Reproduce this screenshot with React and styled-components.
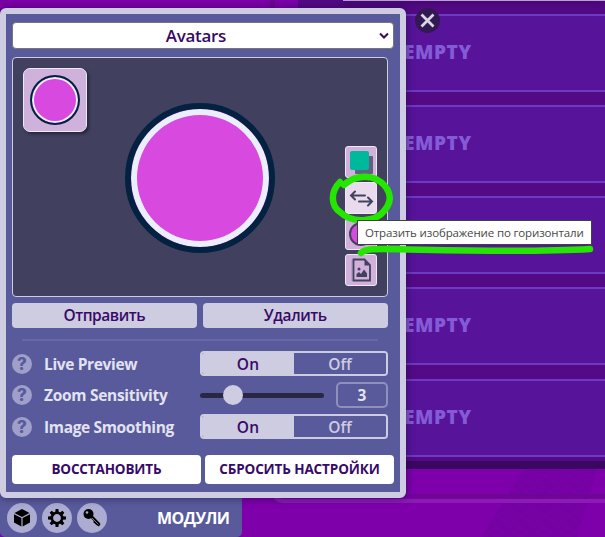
import React from "react";
import styled, { createGlobalStyle } from "styled-components";

const Global = createGlobalStyle`
  *, *::before, *::after { box-sizing: border-box; }
  html, body { margin: 0; overflow: hidden; }
  body { font-family: "Open Sans", "Noto Sans", sans-serif; background: #7d00aa; }
  button { font: inherit; border: 0; padding: 0; margin: 0; }
`;

const Screen = styled.main`
  position: relative;
  width: 605px;
  height: 537px;
  overflow: hidden;
  background: #7d00aa;
`;

const Label = styled.span`
  display: inline-block;
  white-space: nowrap;
  letter-spacing: ${(p) => p.$ls || 0}px;
  margin-right: ${(p) => -(p.$ls || 0)}px;
`;

/* Lobby behind the dialog */
const Lobby = styled.section`
  margin-left: 298px;
  height: 469px;
  padding: 13.5px 0 0 2px;
  background: #540a86;
  border-bottom: 8px solid #3a0860;
`;
const Seam = styled.div`
  position: absolute;
  left: 270px;
  top: 0;
  width: 5px;
  height: 8px;
  background: #6c0791;
`;
const TopBar = styled.div`
  position: absolute;
  left: 343px;
  right: 0;
  top: 0;
  height: 1px;
  background: #b9a2cf;
  box-shadow: 0 1px 6px 1px #3b0560;
`;
const Slot = styled.div`
  display: flex;
  align-items: center;
  height: 78px;
  margin-bottom: 13.25px;
  padding: 0 0 2px 102px;
  background: #57149a;
  border: 2px solid #6d3bc2;
  border-right: 0;
  color: #845bd6;
  font-size: 19px;
  font-weight: 800;
`;
const Backdrop = styled.svg`
  position: absolute;
  left: 242px;
  top: 469px;
`;

/* Modules bar */
const ModuleBar = styled.footer`
  position: absolute;
  left: 0;
  top: 490px;
  width: 242px;
  height: 47px;
  padding: 13px 12px 4px 7px;
  display: flex;
  align-items: center;
  gap: 5px;
  color: #fff;
  background: #585a9b;
  border-radius: 0 0 5px 5px;
  font-size: 16px;
  font-weight: 700;
`;
const RoundButton = styled.button`
  width: 30px;
  height: 30px;
  border-radius: 50%;
  background: #acabd2;
  display: grid;
  place-items: center;
  svg { display: block; }
`;
const ModuleTitle = styled.div`margin-left: auto;`;

/* Dialog */
const Dialog = styled.section`
  position: absolute;
  left: 0;
  top: 8px;
  width: 406px;
  height: 490px;
  padding: 8px 6px;
  border: 6px solid #cdcce1;
  border-radius: 6px;
  background: #585a9b;
  box-shadow: 0 0 9px rgba(25, 5, 60, 0.6);
  color: #380a68;
`;
const SelectBox = styled.div`
  position: relative;
  width: 382px;
  height: 27px;
  display: grid;
  place-items: center;
  padding: 0 14px 1px 0;
  border: 1px solid #767676;
  border-radius: 4px;
  background: #fff;
  font-size: 17px;
  font-weight: 600;
  line-height: 1;
  svg { position: absolute; right: 4px; top: 9px; }
`;
const Canvas = styled.div`
  position: relative;
  width: 376px;
  height: 240px;
  margin-top: 8px;
  border: 1px solid #cdcce1;
  border-radius: 4px;
  background: #41415f;
`;
const Preview = styled.div`
  position: absolute;
  left: 112px;
  top: 45px;
  width: 150px;
  height: 150px;
  border: 6px solid #032242;
  border-radius: 50%;
  background: #d84adf;
  box-shadow: inset 0 0 0 6px #e9effc;
`;
const Thumb = styled.div`
  position: absolute;
  left: 10px;
  top: 10px;
  width: 64px;
  height: 64px;
  padding: 6px;
  border: 1px solid #ecebf9;
  border-radius: 7px;
  background: #cfb1dc;
  box-shadow: 2px 2px 3px #24243b;
`;
const ThumbDot = styled.div`
  width: 50px;
  height: 50px;
  border: 2px solid #032242;
  border-radius: 50%;
  background: #d84adf;
  box-shadow: inset 0 0 0 2px #e9effc;
`;
const Tools = styled.div`
  position: absolute;
  left: 332px;
  top: 88px;
  display: grid;
  gap: 4px;
`;
const Tool = styled.button`
  width: 32px;
  height: 32px;
  border: 1px solid #f0e8f6;
  border-radius: 3px;
  background: ${(p) => (p.$active ? "#e9dbed" : "#d2b0dc")};
  svg { display: block; }
`;
const Row = styled.div`
  display: flex;
  align-items: center;
  gap: ${(p) => p.$gap || 0}px;
`;
const Action = styled.button`
  width: 185px;
  height: 25px;
  border-radius: 4px;
  color: #380a68;
  background: #cdcce1;
  font-size: 15.5px;
  font-weight: 600;
  line-height: 23px;
`;
const Actions = styled(Row)`margin-top: 6px;`;
const Divider = styled.div`
  width: 356px;
  height: 2px;
  margin: 11px 0 10px 10px;
  background: #6667a6;
`;
const Settings = styled.div`
  width: 376px;
  display: grid;
  grid-template-rows: 25px 26px 25px;
  row-gap: 6px;
`;
const Setting = styled.div`
  display: grid;
  grid-template-columns: 32px 156px 188px;
  align-items: center;
  color: #e2e2f1;
  font-size: 15.5px;
  font-weight: 700;
`;
const Help = styled.span`
  width: 20px;
  height: 20px;
  border-radius: 50%;
  display: grid;
  place-items: center;
  background: #a09fca;
  color: #585a9b;
  font: 800 17px/20px Inter, sans-serif;
`;
const Toggle = styled.div`
  display: flex;
  height: 25px;
  border: 2px solid #cdcce1;
  border-radius: 4px;
  overflow: hidden;
`;
const Option = styled.span`
  flex: 1;
  display: grid;
  place-items: center;
  background: ${(p) => (p.$on ? "#cdcce1" : "#585a9b")};
  color: ${(p) => (p.$on ? "#380a68" : "#cdcce1")};
  font-weight: 600;
  font-size: 15.5px;
  line-height: 20px;
`;
const Slider = styled.div`
  width: 124px;
  height: 5px;
  display: flex;
  align-items: center;
  padding-left: 23px;
  border-radius: 3px;
  background: #292844;
`;
const Knob = styled.span`
  width: 20px;
  height: 20px;
  border-radius: 50%;
  background: #cdcce1;
`;
const Value = styled.span`
  width: 52px;
  height: 26px;
  display: grid;
  place-items: center;
  border: 2px solid #8f90be;
  border-radius: 5px;
  line-height: 20px;
`;
const ResetRow = styled(Row)`margin-top: 16px;`;
const Reset = styled.button`
  width: 189px;
  height: 29px;
  padding-bottom: 1px;
  border-radius: 4px;
  background: #fff;
  color: #380a68;
  font-size: 13.5px;
  font-weight: 700;
`;

const Close = styled.button`
  position: absolute;
  left: 415px;
  top: 8px;
  width: 25px;
  height: 25px;
  border-radius: 50%;
  background: #331951;
  svg { display: block; }
`;
const Tooltip = styled.div`
  position: absolute;
  left: 357px;
  top: 220px;
  width: 235px;
  height: 25px;
  padding-left: 7px;
  border: 1px solid #414141;
  background: #fff;
  color: #484848;
  font-size: 11.5px;
  line-height: 24px;
`;
const Ink = styled.svg`
  position: absolute;
  left: 320px;
  top: 165px;
`;

const Pattern = () => (
  <Backdrop width="363" height="68">
    <defs>
      <pattern id="checks" width="12" height="10" patternUnits="userSpaceOnUse">
        <circle cx="3" cy="2.500" r="3" fill="#7202a1" />
        <circle cx="9" cy="7.500" r="3" fill="#7202a1" />
      </pattern>
    </defs>
    <path d="M282 0H355L335 68H240Z" fill="#7900a5" />
    <path d="M282 0H355L335 68H240Z" fill="url(#checks)" />
    <path d="M33 27H363" stroke="#6c0791" strokeWidth="3" />
    <path d="M32 22Q32 32 42 32H363" fill="none" stroke="#8a1cb2" strokeWidth="4" />
  </Backdrop>
);

const SwapIcon = () => (
  <svg width="30" height="30" fill="none" stroke="#42425f" strokeWidth="2" strokeLinecap="round">
    <path d="M19 12.500H5M9 8.500L5 12.500L9 16.500M13 18.500H26M22 14.500L26 18.500L22 22.500" />
  </svg>
);
const ColorIcon = () => (
  <svg width="30" height="30">
    <rect x="9" y="9" width="18" height="18" rx="1" fill="#61617f" />
    <rect x="4" y="4" width="19" height="19" rx="2" fill="#00b89c" />
  </svg>
);
const CircleIcon = () => (
  <svg width="30" height="30">
    <circle cx="15" cy="15" r="11" fill="#d84adf" stroke="#42425f" strokeWidth="2" />
  </svg>
);
const FileIcon = () => (
  <svg width="30" height="30">
    <path d="M6 5V26" stroke="#a791b6" strokeWidth="1" />
    <path d="M7.500 4.500H18.500L24 10V25.500H7.500Z" fill="none" stroke="#42425f" strokeWidth="1.800" />
    <path d="M18.500 4V10.500H24.500Z" fill="#42425f" />
    <path d="M10.500 22V19L13 17L15 19L18 14.500L21 18.500V22Z" fill="#42425f" />
    <circle cx="13" cy="14" r="1.500" fill="#42425f" />
  </svg>
);

const Toggles = () => (
  <Toggle>
    <Option $on><Label $ls={0.2}>On</Label></Option>
    <Option><Label>Off</Label></Option>
  </Toggle>
);

export default function App() {
  return (
    <Screen>
      <Global />
      <Lobby>
        {[0, 1, 2, 3, 4].map((n) => (
          <Slot key={n}><Label $ls={0.6}>EMPTY</Label></Slot>
        ))}
      </Lobby>
      <Seam />
      <TopBar />
      <Pattern />
      <ModuleBar>
        <RoundButton aria-label="Modules">
          <svg width="18" height="20" viewBox="0 0 18 20">
            <path d="M9 1L16.500 5L9 9L1.500 5ZM1 6.200L8.400 10.100V18.500L1 14.500ZM17 6.200L9.600 10.100V18.500L17 14.500Z" />
          </svg>
        </RoundButton>
        <RoundButton aria-label="Settings">
          <svg width="20" height="20" viewBox="-10 -10 20 20">
            <circle r="5.200" fill="none" stroke="#000" strokeWidth="2.600" />
            {[0, 45, 90, 135, 180, 225, 270, 315].map((a) => (
              <path key={a} d="M-1.800 -5.500L-1.400 -9H1.400L1.800 -5.500Z" transform={`rotate(${a})`} />
            ))}
          </svg>
        </RoundButton>
        <RoundButton aria-label="Keys">
          <svg width="20" height="20" viewBox="0 0 20 20">
            <circle cx="6.500" cy="6" r="5" />
            <path d="M9 8L17 16.500" stroke="#000" strokeWidth="3" />
            <path d="M11 14L14 11.500L18.500 16L17 18.500L14.500 17Z" />
            <path d="M10 10L16.500 16.500" stroke="#acabd2" strokeWidth="0.700" />
            <circle cx="5" cy="4.500" r="1.300" fill="#acabd2" />
          </svg>
        </RoundButton>
        <ModuleTitle><Label $ls={-0.55}>МОДУЛИ</Label></ModuleTitle>
      </ModuleBar>

      <Dialog>
        <SelectBox>
          <Label $ls={-0.3}>Avatars</Label>
          <svg width="10" height="8" fill="none" stroke="#380a68" strokeWidth="2"><path d="M1 1.500L5 5.500L9 1.500" /></svg>
        </SelectBox>
        <Canvas>
          <Thumb><ThumbDot /></Thumb>
          <Preview />
          <Tools>
            <Tool><ColorIcon /></Tool>
            <Tool $active><SwapIcon /></Tool>
            <Tool><CircleIcon /></Tool>
            <Tool><FileIcon /></Tool>
          </Tools>
        </Canvas>
        <Actions $gap={6}>
          <Action><Label $ls={-0.45}>Отправить</Label></Action>
          <Action><Label $ls={-0.4}>Удалить</Label></Action>
        </Actions>
        <Divider />
        <Settings>
          <Setting><Help>?</Help><Label $ls={-0.35}>Live Preview</Label><Toggles /></Setting>
          <Setting>
            <Help>?</Help><Label $ls={-0.3}>Zoom Sensitivity</Label>
            <Row $gap={12}><Slider><Knob /></Slider><Value>3</Value></Row>
          </Setting>
          <Setting><Help>?</Help><Label $ls={-0.35}>Image Smoothing</Label><Toggles /></Setting>
        </Settings>
        <ResetRow $gap={4}>
          <Reset><Label $ls={-0.15}>ВОССТАНОВИТЬ</Label></Reset>
          <Reset><Label $ls={-0.12}>СБРОСИТЬ НАСТРОЙКИ</Label></Reset>
        </ResetRow>
      </Dialog>

      <Close aria-label="Close">
        <svg width="25" height="25" stroke="#d9d6e5" strokeWidth="2.800"><path d="M6.500 6.500L18.500 18.500M18.500 6.500L6.500 18.500" /></svg>
      </Close>
      <Ink width="285" height="95" fill="none" stroke="#25e600" strokeWidth="6.500" strokeLinecap="round">
        <path d="M20 17C10 27 11 41 20 47C32 59 56 57 64 46C75 34 69 21 56 14C45 9 31 13 24 20" />
        <path d="M41 88C45 84 53 84 64 84C125 85 204 88 270 84" />
      </Ink>
      <Tooltip><Label $ls={-0.14}>Отразить изображение по горизонтали</Label></Tooltip>
    </Screen>
  );
}
